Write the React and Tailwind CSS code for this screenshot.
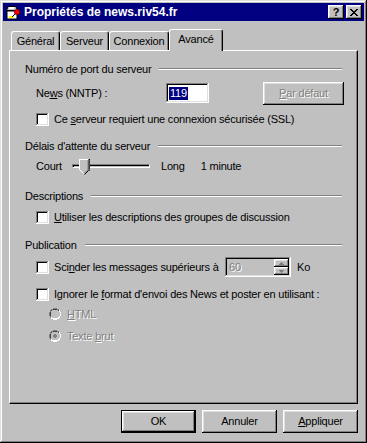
import React from 'react';

const raised = 'shadow-[inset_-1px_-1px_#000,inset_1px_1px_#fff,inset_-2px_-2px_#808080,inset_2px_2px_#dfdfdf]';
const sunken = 'shadow-[inset_-1px_-1px_#fff,inset_1px_1px_#808080,inset_-2px_-2px_#dfdfdf,inset_2px_2px_#000]';
const disabledText = 'text-[#808080] [text-shadow:1px_1px_0_#fff]';

const GroupHeader = ({ children }) => (
    <div className="flex items-center h-[14px]">
        <span className="whitespace-nowrap">{children}</span>
        <div className="flex-1 ml-[8px] border-t border-t-[#808080] border-b border-b-white" />
    </div>
);

const Check = () => (
    <div className={`w-[13px] h-[13px] bg-white shrink-0 ${sunken}`} />
);

const Radio = ({ checked }) => (
    <svg width="12" height="12" viewBox="0 0 12 12" className="shrink-0">
        <path d="M4 0h4v1h2v1h1v2h1v4h-1v2h-1v1h-2v1H4v-1H2v-1H1V8H0V4h1V2h1V1h2z" fill="#fff" />
        <path d="M4 0h4v1H4zM2 1h2v1H2zM8 1h2v1H8zM1 2h1v2H1zM0 4h1v4H0zM1 8h1v2H1z" fill="#808080" />
        <path d="M4 1h4v1H4zM2 2h2v1H2zM8 2h2v1H8zM1 4h1v4H1zM2 3h1v1H2zM2 8h1v1H2z" fill="#404040" />
        <path d="M10 8h1v2h-1zM11 4h1v4h-1zM8 10h2v1H8zM4 11h4v1H4zM2 10h2v1H2z" fill="#fff" />
        <path d="M3 2h6v1h1v1h1v4h-1v1H9v1H3V9H2V3h1z" fill="#c0c0c0" />
        {checked && <path d="M5 4h2v1h1v2H7v1H5V7H4V5h1z" fill="#808080" />}
    </svg>
);

const Button = ({ children, def, disabled, className = '' }) => (
    <div
        className={`flex items-center justify-center bg-[#c0c0c0] whitespace-nowrap ${def
            ? 'shadow-[inset_-1px_-1px_#000,inset_1px_1px_#000,inset_-2px_-2px_#000,inset_2px_2px_#fff,inset_-3px_-3px_#808080,inset_3px_3px_#dfdfdf]'
            : raised} ${disabled ? disabledText : 'text-black'} ${className}`}
    >
        {children}
    </div>
);

const TitleIcon = () => (
    <svg width="16" height="16" viewBox="0 0 16 16">
        <rect x="2" y="7" width="10" height="8" fill="#fff" stroke="#000" strokeWidth="1" />
        <rect x="4" y="12" width="5" height="2" fill="#ffff00" />
        <path d="M1.5 6.5 L3 2.5 H11 L12.5 6.5 Z" fill="#c0c0c0" stroke="#000" strokeWidth="1" />
        <rect x="4" y="3" width="5" height="2" fill="#fff" />
        <circle cx="12" cy="8" r="2.6" fill="#ff0000" stroke="#800000" strokeWidth="0.8" />
        <path d="M10 10 L7 13" stroke="#000" strokeWidth="1" />
    </svg>
);

const Tab = ({ children, selected, width }) => (
    <div
        className={`relative bg-[#c0c0c0] flex items-center justify-center whitespace-nowrap border-l border-t border-l-white border-t-white border-r border-r-black rounded-tl-[3px] rounded-tr-[3px] shadow-[inset_-1px_0_#808080] ${selected
            ? 'h-[22px] mb-[-1px] z-10 pb-[2px]'
            : 'h-[19px]'}`}
        style={{ width }}
    >
        {children}
    </div>
);

const App = () => {
    return (
        <div
            className="w-[367px] h-[443px] bg-[#c0c0c0] p-[3px] flex flex-col text-[11px] leading-[13px] tracking-[-0.2px] text-black shadow-[inset_-1px_-1px_#000,inset_1px_1px_#dfdfdf,inset_-2px_-2px_#808080,inset_2px_2px_#fff]"
            style={{ fontFamily: '"Liberation Sans", Arial, sans-serif' }}
        >
            {/* title bar */}
            <div className="h-[18px] bg-[#000080] flex items-center pl-[2px] pr-[2px]">
                <TitleIcon />
                <span className="ml-[3px] text-white font-bold text-[12px] leading-[14px] tracking-normal whitespace-nowrap">Propriétés de news.riv54.fr</span>
                <div className="ml-auto flex gap-[2px]">
                    <div className={`w-[16px] h-[14px] bg-[#c0c0c0] flex items-center justify-center font-bold text-[11px] leading-none ${raised}`}>?</div>
                    <div className={`w-[16px] h-[14px] bg-[#c0c0c0] flex items-center justify-center ${raised}`}>
                        <svg width="8" height="7" viewBox="0 0 8 7">
                            <path d="M0 0h2v1h1v1h2V1h1V0h2v1H7v1H6v1H5v1h1v1h1v1h1v1H6V6H5V5H3v1H2v1H0V6h1V5h1V4h1V3H2V2H1V1H0z" fill="#000" />
                        </svg>
                    </div>
                </div>
            </div>

            {/* body */}
            <div className="flex flex-col px-[6px] pt-[8px]">
                <div className="flex items-end h-[21px] pl-[2px]">
                    <Tab width={49}>Général</Tab>
                    <Tab width={49}>Serveur</Tab>
                    <Tab width={60}>Connexion</Tab>
                    <Tab width={54} selected>Avancé</Tab>
                </div>

                <div className="h-[354px] border-l border-t border-l-white border-t-white border-r border-b border-r-black border-b-black shadow-[inset_-1px_-1px_#808080] flex flex-col px-[15px] whitespace-nowrap">
                    <div className="mt-[11px]">
                        <GroupHeader>Numéro de port du serveur</GroupHeader>
                    </div>

                    <div className="mt-[6px] h-[23px] flex items-start pl-[11px]">
                        <span className="w-[130px] mt-[5px]">Ne<u>w</u>s (NNTP) :</span>
                        <div className={`mt-[1px] w-[43px] h-[20px] bg-white flex items-center pl-[3px] ${sunken}`}>
                            <span className="bg-[#000080] text-white px-[1px]">119</span>
                        </div>
                        <Button disabled className="ml-auto mr-[-2px] w-[81px] h-[23px]">
                            <span><u>P</u>ar défaut</span>
                        </Button>
                    </div>

                    <div className="mt-[8px] h-[13px] flex items-center pl-[11px] gap-[5px]">
                        <Check />
                        <span>Ce <u>s</u>erveur requiert une connexion sécurisée (SSL)</span>
                    </div>

                    <div className="mt-[13px]">
                        <GroupHeader>Délais d'attente du serveur</GroupHeader>
                    </div>

                    <div className="mt-[3px] h-[20px] flex items-center pl-[11px]">
                        <span className="w-[36px]">Court</span>
                        <div className="relative w-[78px] h-[20px] flex items-center">
                            <div className="w-full h-[4px] border-t border-l border-t-[#808080] border-l-[#808080] border-b border-r border-b-white border-r-white shadow-[inset_1px_1px_#000]" />
                            <svg className="absolute left-[7px] top-[3px]" width="11" height="16" viewBox="0 0 11 16">
                                <path d="M0 0h11v11l-5 5h-1l-5-5z" fill="#c0c0c0" />
                                <path d="M0 0h10v1H1v10H0z" fill="#fff" />
                                <path d="M1 11l4 4" stroke="#fff" strokeWidth="1" />
                                <path d="M10 0h1v11h-1zM5.5 15.5l5-5" stroke="#000" strokeWidth="1" fill="#000" />
                                <path d="M9 1h1v10H9zM5 14.5l4-4" stroke="#808080" strokeWidth="1" />
                            </svg>
                        </div>
                        <span className="ml-[11px]">Long</span>
                        <span className="ml-[16px]">1 minute</span>
                    </div>

                    <div className="mt-[13px]">
                        <GroupHeader>Descriptions</GroupHeader>
                    </div>

                    <div className="mt-[8px] h-[13px] flex items-center pl-[11px] gap-[5px]">
                        <Check />
                        <span><u>U</u>tiliser les descriptions des groupes de discussion</span>
                    </div>

                    <div className="mt-[14px]">
                        <GroupHeader>Publication</GroupHeader>
                    </div>

                    <div className="mt-[5px] h-[20px] flex items-center pl-[11px]">
                        <Check />
                        <span className="ml-[5px] w-[171px] shrink-0">Sci<u>n</u>der les messages supérieurs à</span>
                        <div className={`w-[66px] h-[20px] shrink-0 bg-[#c0c0c0] flex items-center justify-between pl-[4px] pr-[2px] ${sunken}`}>
                            <span className={disabledText}>60</span>
                            <div className="flex flex-col">
                                <div className={`w-[15px] h-[8px] bg-[#c0c0c0] flex items-center justify-center ${raised}`}>
                                    <svg width="5" height="3" viewBox="0 0 5 3"><path d="M2 0h1v1h1v1h1v1H0V2h1V1h1z" fill="#808080" /></svg>
                                </div>
                                <div className={`w-[15px] h-[8px] bg-[#c0c0c0] flex items-center justify-center ${raised}`}>
                                    <svg width="5" height="3" viewBox="0 0 5 3"><path d="M0 0h5v1H4v1H3v1H2V2H1V1H0z" fill="#808080" /></svg>
                                </div>
                            </div>
                        </div>
                        <span className="ml-[6px]">Ko</span>
                    </div>

                    <div className="mt-[11px] h-[13px] flex items-center pl-[11px] gap-[5px]">
                        <Check />
                        <span>Ignorer le <u>f</u>ormat d'envoi des News et poster en utilisant :</span>
                    </div>

                    <div className="mt-[5px] h-[16px] flex items-center pl-[24px] gap-[6px]">
                        <Radio />
                        <span className={disabledText}><u>H</u>TML</span>
                    </div>

                    <div className="mt-[6px] h-[16px] flex items-center pl-[24px] gap-[6px]">
                        <Radio checked />
                        <span className={disabledText}>Texte <u>b</u>rut</span>
                    </div>
                </div>

                <div className="mt-[6px] flex justify-end gap-[6px]">
                    <Button def className="w-[75px] h-[23px]">OK</Button>
                    <Button className="w-[75px] h-[23px]">Annuler</Button>
                    <Button className="w-[75px] h-[23px]"><span><u>A</u>ppliquer</span></Button>
                </div>
            </div>
        </div>
    );
};

export default App;
